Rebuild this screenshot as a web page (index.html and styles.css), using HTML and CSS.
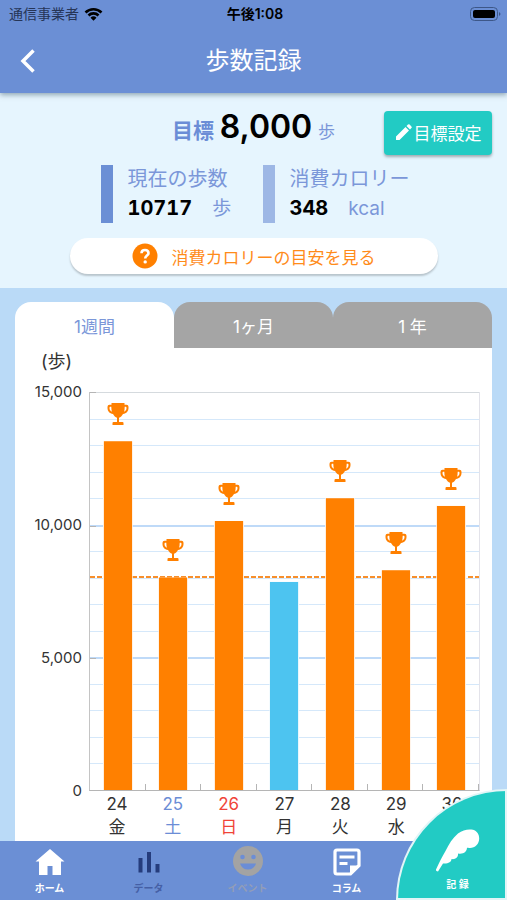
FILE: index.html
```html
<!DOCTYPE html>
<html lang="ja">
<head>
  <meta charset="UTF-8">
  <meta name="viewport" content="width=device-width, initial-scale=1.0">
  <title>歩数記録</title>
  <link rel="stylesheet" href="styles.css">
</head>
<body>
  <svg class="symbols" aria-hidden="true">
    <symbol id="trophy" viewBox="0 0 22 22">
      <path d="M4.500 0h13v1.800h2a2 2 0 0 1 2 2V5c0 3-2 5.500-5.500 6-1 2-2.500 3.300-4 3.800V19h3.500a1 1 0 0 1 1 1v2h-11v-2a1 1 0 0 1 1-1H10v-4.200c-1.500-.5-3-1.800-4-3.800C2.500 10.500.5 8 .5 5V3.800a2 2 0 0 1 2-2h2z" fill="#ff8000"/>
      <path d="M4.300 3.800H3.200Q2.500 3.800 2.500 5c0 1.800.8 3 2.500 3.700Q4.300 7 4.300 3.800zM17.700 3.800h1.100q.7 0 .7 1.200c0 1.800-.8 3-2.500 3.700q.7-1.700.7-4.900z" fill="#fff"/>
    </symbol>
  </svg>

  <header class="header">
    <div class="status">
      <div class="carrier">
        <span>通信事業者</span>
        <svg width="19" height="14" viewBox="0 0 19 14">
          <path d="M1.500 5.500a11.500 11.500 0 0 1 16 0M4.500 8.500a7 7 0 0 1 10 0" fill="none" stroke="#000" stroke-width="2.600"/>
          <path d="M6.500 10.800a4.300 4.300 0 0 1 6 0l-3 3z"/>
        </svg>
      </div>
      <span class="time">午後1:08</span>
      <svg class="battery" width="31" height="14" viewBox="0 0 31 14">
        <rect x=".5" y=".5" width="27" height="13" rx="4" fill="none" stroke="#3d5788"/>
        <rect x="3" y="3" width="22" height="8" rx="2"/>
        <path d="M29 5q3 2 0 4z" fill="#3d5788"/>
      </svg>
    </div>
    <div class="title-bar">
      <button class="back" type="button" aria-label="戻る">
        <svg width="16" height="24" viewBox="0 0 16 24">
          <path d="M13.500 1.500L3 12l10.500 10.500" fill="none" stroke="#fff" stroke-width="3.500"/>
        </svg>
      </button>
      <h1>歩数記録</h1>
    </div>
  </header>

  <section class="summary">
    <div class="goal">
      <p class="goal-text"><span class="goal-label">目標</span> <strong>8,000</strong> <span class="unit">歩</span></p>
      <button class="goal-button" type="button">
        <svg width="17" height="17" viewBox="0 0 17 17" fill="#fff">
          <path d="M1 12.500L10.500 3l3.500 3.500L4.500 16H1zM11.500 2L13 .6q.8-.8 1.600 0l1.800 1.800q.8.8 0 1.600L15 5.500z"/>
        </svg>
        目標設定
      </button>
    </div>
    <div class="stats">
      <div class="stat">
        <p>現在の歩数</p>
        <p><strong>10717</strong><span>歩</span></p>
      </div>
      <div class="stat stat-light">
        <p>消費カロリー</p>
        <p><strong>348</strong><span>kcal</span></p>
      </div>
    </div>
    <button class="guide" type="button">
      <svg width="26" height="26" viewBox="0 0 26 26">
        <circle cx="13" cy="13" r="12.500" fill="#ff8000"/>
        <path d="M9.500 10.200Q9.500 7 13 7t3.500 3.200c0 2.300-3.300 2.600-3.300 5.300" fill="none" stroke="#fff" stroke-width="2.600"/>
        <circle cx="13.200" cy="18.900" r="1.700" fill="#fff"/>
      </svg>
      消費カロリーの目安を見る
    </button>
  </section>

  <main class="main">
    <div class="tabs" role="tablist">
      <button class="tab active" type="button" role="tab" aria-selected="true">1週間</button>
      <button class="tab" type="button" role="tab" aria-selected="false">1ヶ月</button>
      <button class="tab" type="button" role="tab" aria-selected="false">1 年</button>
    </div>
    <div class="card">
      <p class="axis-unit">(歩)</p>
      <div class="chart">
        <div class="y-axis">
          <span>15,000</span>
          <span>10,000</span>
          <span>5,000</span>
          <span>0</span>
        </div>
        <div class="plot">
          <div class="grid">
            <i class="major top"></i><i></i><i></i><i></i><i></i>
            <i class="major"></i><i></i><i></i><i></i><i></i>
            <i class="major"></i><i></i><i></i><i></i><i></i>
          </div>
          <svg class="goal-line" width="100%" height="2">
            <line x1="0" y1="1" x2="100%" y2="1" stroke="#f78f2c" stroke-width="2" stroke-dasharray="5 2"/>
          </svg>
          <div class="bars">
            <div class="col"><svg class="trophy"><use href="#trophy"/></svg><div class="bar" style="height: 87.6%"></div></div>
            <div class="col"><svg class="trophy"><use href="#trophy"/></svg><div class="bar" style="height: 53.4%"></div></div>
            <div class="col"><svg class="trophy"><use href="#trophy"/></svg><div class="bar" style="height: 67.6%"></div></div>
            <div class="col"><div class="bar missed" style="height: 52.3%"></div></div>
            <div class="col"><svg class="trophy"><use href="#trophy"/></svg><div class="bar" style="height: 73.3%"></div></div>
            <div class="col"><svg class="trophy"><use href="#trophy"/></svg><div class="bar" style="height: 55.2%"></div></div>
            <div class="col"><svg class="trophy"><use href="#trophy"/></svg><div class="bar" style="height: 71.4%"></div></div>
          </div>
        </div>
        <div class="x-axis">
          <div>24<br>金</div>
          <div class="sat">25<br>土</div>
          <div class="sun">26<br>日</div>
          <div>27<br>月</div>
          <div>28<br>火</div>
          <div>29<br>水</div>
          <div>30<br>木</div>
        </div>
      </div>
    </div>
  </main>

  <nav class="nav">
    <a class="nav-item" href="#home">
      <svg width="30" height="28" viewBox="0 0 30 28"><path d="M15 1L.5 13.500H4V27h8.500v-9h5v9H26V13.500h3.500z" fill="#fff"/></svg>
      ホーム
    </a>
    <a class="nav-item data" href="#data">
      <svg width="30" height="28" viewBox="0 0 30 28"><path d="M4.500 10h4v14.500h-4zM13 4h4v20.500h-4zM21.500 16h4v8.500h-4z" fill="#253c7c"/></svg>
      データ
    </a>
    <a class="nav-item event" href="#event">
      <svg width="30" height="30" viewBox="0 0 30 30">
        <circle cx="15" cy="15" r="15" fill="#a3a3a3"/>
        <g fill="#6b8dd6"><circle cx="9.500" cy="11" r="2.300"/><circle cx="20.500" cy="11" r="2.300"/><path d="M7 17.500h16q-2 6-8 6t-8-6z"/></g>
      </svg>
      イベント
    </a>
    <a class="nav-item" href="#column">
      <svg width="28" height="28" viewBox="0 0 28 28">
        <path d="M4 2h20q2 0 2 2v13.500L17.500 26H4q-2 0-2-2V4q0-2 2-2z" fill="none" stroke="#fff" stroke-width="3.200"/>
        <path d="M17 27v-9.500h9z" fill="#fff"/>
        <path d="M6.500 9h15M6.500 15.500h8" stroke="#fff" stroke-width="3"/>
      </svg>
      コラム
    </a>
    <a class="record" href="#record">
      <svg width="45" height="43" viewBox="0 0 45 43">
        <path d="M3 42.500q-2.500 0-2-2C4 34 7 28 10.500 22 14 15 17.500 9 23 4.500 28 .8 33.500-.3 38 .8c4 1.200 6.200 4.700 6.200 8.700 0 5.500-4.200 9.500-9.200 9.500-1.500 0-2.500-.3-3-.5 0 4-3.500 7-9 6 .5 3.500-2.500 6.300-6.500 5.500 0 3-3.500 5-8.500 4.500z" fill="#fff"/>
      </svg>
      記 録
    </a>
  </nav>
</body>
</html>
```

FILE: styles.css
```css
* {
  box-sizing: border-box;
}

body {
  margin: 0;
  height: 100vh;
  display: flex;
  flex-direction: column;
  overflow: hidden;
  background-color: #badaf7;
  color: #333;
  font-family: Inter, "Noto Sans CJK JP", sans-serif;
}

h1,
p {
  margin: 0;
}

button {
  border: none;
  padding: 0;
  font-family: inherit;
  cursor: pointer;
}

svg {
  display: block;
}

.symbols {
  position: absolute;
  width: 0;
  height: 0;
}

/* header */
.header {
  position: relative;
  background-color: #6b8fd5;
  box-shadow: 0 2px 5px rgba(60, 90, 110, 0.5);
}

.status {
  display: grid;
  grid-template-columns: 1fr auto 1fr;
  align-items: center;
  height: 28px;
  padding: 0 6px 0 9px;
  font-size: 14px;
  line-height: 20px;
  color: #263557;
}

.carrier {
  display: flex;
  align-items: center;
  gap: 5px;
}

.time {
  color: #000;
  font-weight: 600;
}

.battery {
  justify-self: end;
}

.title-bar {
  display: grid;
  grid-template-columns: 48px 1fr 48px;
  align-items: center;
  height: 65px;
}

.back {
  display: flex;
  justify-content: flex-end;
  width: 36px;
  background: none;
}

h1 {
  color: #fff;
  font-size: 24px;
  font-weight: 400;
  line-height: 32px;
  text-align: center;
}

/* summary */
.summary {
  display: flex;
  flex-direction: column;
  padding: 14px 15px;
  background-color: #e6f5fe;
  color: #7b97d9;
}

.goal {
  display: grid;
  grid-template-columns: 1fr auto 1fr;
  align-items: center;
  height: 48px;
}

.goal-text {
  grid-column: 2;
  line-height: 40px;
  padding-bottom: 6px;
  font-size: 17px;
}

.goal-label {
  font-size: 21px;
  font-weight: 700;
  color: #6b8dd6;
}

.goal-text strong {
  margin: 0 1px;
  font-size: 32px;
  font-weight: 600;
  color: #000;
}

.goal-button {
  display: flex;
  align-items: center;
  justify-content: center;
  gap: 2px;
  justify-self: end;
  width: 108px;
  height: 44px;
  border-radius: 4px;
  background-color: #22cbc4;
  box-shadow: 0 2px 3px rgba(0, 0, 0, 0.3);
  color: #fff;
  font-size: 17px;
}

.stats {
  display: grid;
  grid-template-columns: 162px 144px;
  justify-content: center;
  margin-top: 10px;
}

.stat {
  border-left: 12px solid #6b8fd5;
  padding-left: 15px;
  font-size: 20px;
  line-height: 29px;
  white-space: nowrap;
}

.stat-light {
  border-color: #9db7e5;
}

.stat strong {
  margin-right: 20px;
  color: #000;
  font-weight: 700;
  font-variant-numeric: tabular-nums;
}

.stat span {
  font-size: 19px;
}

.guide {
  display: flex;
  align-items: center;
  justify-content: center;
  gap: 14px;
  align-self: center;
  width: 368px;
  max-width: 100%;
  height: 36px;
  margin-top: 15px;
  border-radius: 18px;
  background-color: #fff;
  box-shadow: 0 2px 2px rgba(0, 0, 0, 0.2);
  color: #ff8b1a;
  font-size: 17px;
}

/* chart card */
.main {
  flex: 1;
  display: flex;
  flex-direction: column;
  min-height: 0;
  padding: 14px 15px 0;
}

.tabs {
  display: grid;
  grid-template-columns: repeat(3, 1fr);
}

.tab {
  height: 46px;
  border-radius: 16px 16px 0 0;
  background-color: #a5a5a5;
  color: #fff;
  font-size: 17px;
}

.tab.active {
  background-color: #fff;
  color: #7b97d9;
}

.card {
  flex: 1;
  display: flex;
  flex-direction: column;
  padding: 0 12px 2px 15px;
  background-color: #fff;
}

.axis-unit {
  padding-left: 11px;
  font-size: 18px;
  line-height: 28px;
}

.chart {
  flex: 1;
  display: grid;
  grid-template-columns: 52px 1fr;
  grid-template-rows: 1fr auto;
  column-gap: 7px;
  margin-top: 16px;
}

.y-axis {
  display: flex;
  flex-direction: column;
  justify-content: space-between;
  margin: -10px 0;
  font-size: 15px;
  line-height: 20px;
  text-align: right;
}

.plot {
  position: relative;
  border: 1px solid #e3e3ea;
  border-top: none;
  border-left-color: #c4c4c4;
  border-bottom-color: #b5b5b5;
}

.grid {
  display: grid;
  grid-template-rows: repeat(15, 1fr);
  height: 100%;
}

.grid i {
  border-top: 1px solid #d5e8fa;
}

.grid .major {
  border-top: 2px solid #bfdaf8;
}

.grid .top {
  border-top: 1px solid #d5dade;
}

.major::before {
  content: "";
  display: block;
  width: 6px;
  height: 1px;
  margin-top: -1px;
  background-color: #b5b5b5;
}

.goal-line {
  position: absolute;
  left: 0;
  bottom: 53.3%;
}

.bars {
  position: absolute;
  inset: 0;
  display: grid;
  grid-template-columns: repeat(7, 1fr);
}

.col {
  display: flex;
  flex-direction: column;
  align-items: center;
  justify-content: flex-end;
  background: linear-gradient(#b5b5b5, #b5b5b5) right bottom / 1px 6px no-repeat;
}

.bar {
  width: 28px;
  flex-shrink: 0;
  background-color: #ff8000;
  box-shadow: 0 0 0 1px #ffeedd;
  clip-path: inset(0 -1px);
}

.bar.missed {
  background-color: #4dc4f0;
  box-shadow: 0 0 0 1px #e8f7fd;
}

.trophy {
  width: 22px;
  height: 22px;
  margin-bottom: 16px;
}

.x-axis {
  grid-column: 2;
  display: grid;
  grid-template-columns: repeat(7, 1fr);
  padding-top: 2px;
  font-size: 17px;
  line-height: 23px;
  text-align: center;
}

.sat {
  color: #6b8dd6;
}

.sun {
  color: #f04438;
}

/* bottom navigation */
.nav {
  position: relative;
  display: grid;
  grid-template-columns: repeat(5, 1fr);
  height: 59px;
  padding-right: 12px;
  background-color: #6b8fd5;
}

.nav-item {
  display: flex;
  flex-direction: column;
  align-items: center;
  justify-content: flex-end;
  gap: 4px;
  padding-bottom: 4px;
  color: #fff;
  font-size: 10px;
  font-weight: 700;
  line-height: 16px;
  text-decoration: none;
}

.data {
  color: #455fa5;
}

.event {
  color: #929db8;
}

.record {
  position: absolute;
  right: 0;
  bottom: 0;
  display: flex;
  flex-direction: column;
  align-items: center;
  justify-content: flex-end;
  gap: 3px;
  width: 111px;
  height: 111px;
  padding: 0 0 5px 12px;
  border: 2px solid #e2f5f7;
  border-radius: 100% 0 0 0;
  background-color: #22cbc4;
  color: #fff;
  font-size: 10px;
  font-weight: 700;
  line-height: 18px;
  text-decoration: none;
}
```
